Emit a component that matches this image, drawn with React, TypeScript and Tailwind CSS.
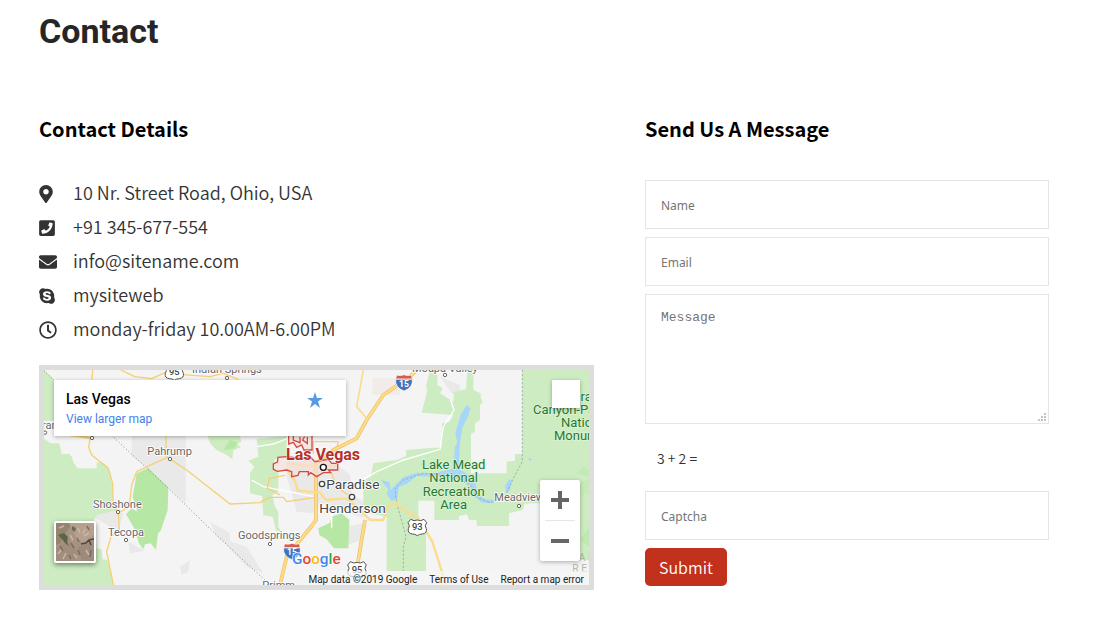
import React from "react";
import { FaEnvelope, FaMapMarkerAlt, FaPhoneSquare, FaRegClock, FaSkype } from "react-icons/fa";

const details = [
  { icon: FaMapMarkerAlt, size: "w-[14px]", text: "10 Nr. Street Road, Ohio, USA" },
  { icon: FaPhoneSquare, size: "w-4", text: "+91 345-677-554" },
  { icon: FaEnvelope, size: "w-[18px]", text: "info@sitename.com" },
  { icon: FaSkype, size: "w-4", text: "mysiteweb" },
  { icon: FaRegClock, size: "w-[18px]", text: "monday-friday 10.00AM-6.00PM" },
];

const town = { fontFamily: "Roboto, sans-serif", fill: "#666", stroke: "#fff", strokeWidth: 5, paintOrder: "stroke" } as const;

function Interstate({ x, y }: { x: number; y: number }) {
  return (
    <g transform={`translate(${x} ${y})`}>
      <path d="M-22-22Q-11-18 0-23Q11-18 22-22L25-10H-25Z" fill="#d75a4a" stroke="#fff" strokeWidth="2" />
      <path d="M-25-9H25Q28 15 0 26Q-28 15-25-9Z" fill="#3f73bd" stroke="#fff" strokeWidth="2" />
      <text y="13" textAnchor="middle" fontSize="26" fontWeight="700" fontFamily="Roboto, sans-serif" fill="#fff">15</text>
    </g>
  );
}

function Highway({ x, y, label }: { x: number; y: number; label: string }) {
  return (
    <g transform={`translate(${x} ${y})`}>
      <path
        d="M-20-24Q-10-17 0-22Q10-17 20-24L28-14Q20-4 27 4Q30 18 15 20Q6 20 0 25Q-6 20-15 20Q-30 18-27 4Q-20-4-28-14Z"
        fill="#fff"
        stroke="#555"
        strokeWidth="3"
      />
      <text y="9" textAnchor="middle" fontSize="28" fontWeight="500" fontFamily="Roboto, sans-serif" fill="#444">{label}</text>
    </g>
  );
}

function MapDrawing() {
  return (
    <svg viewBox="42 30 1635 645" preserveAspectRatio="xMidYMid slice" className="block h-full w-full" aria-hidden="true">
      <rect x="-400" y="-400" width="2600" height="1500" fill="#f4f4f4" />
      <g fill="#e9e9e9">
        <path d="M305 220H467V430L410 378L350 322L305 288Z" />
        <path d="M190 470L262 440L280 462L266 510L240 500Z" />
        <path d="M295 545L345 572L300 580Z" />
        <path d="M540 485L600 520V560L560 530Z" />
        <path d="M570 535L650 560L700 640L650 620Z" />
        <path d="M450 620L480 600L475 635L455 645Z" />
        <path d="M770 300H905L960 345L965 405L1010 430L1000 475L960 460L930 440L870 430L850 460L800 455L785 400L770 350Z" />
        <path d="M950 500L1000 490V540L950 555Z" />
        <path d="M1230 50L1290 75L1290 118L1265 100Z" />
      </g>
      <path d="M1028 55H1110V105H1028Z" fill="#f2ebe8" />
      <g fill="#cdecc2">
        <path d="M42 30L72 58V182H42Z" />
        <path d="M42 236L62 250H88L95 282H118L125 290L130 306L142 325H200V307H215L232 318L242 345L248 385V440L262 450L200 465L190 485L200 565L215 567L218 598L232 600L250 675H42Z" />
        <path d="M530 220H628L634 245L622 252L632 262L610 270L607 298L590 285L560 270L540 250Z" />
        <path d="M680 236L770 228V290L735 298L730 320L745 335V395L727 405L735 440L745 455V500L755 515L738 512L728 470L700 466L696 408L660 400V338L673 320L655 302L685 290Z" />
        <path d="M1000 400L1003 360L1022 350L1030 310L1100 300L1170 270L1128 295V270L1235 262L1236 190L1258 186L1270 165L1175 158L1192 92L1188 78L1200 30L1222 45V75L1238 85L1230 100L1270 125L1272 95L1308 88L1312 30H1330V90L1352 100V112L1358 125L1350 135V180L1335 190V215L1323 222V340H1430V305L1455 302V282H1477V30H1677V675H1560L1530 560L1530 440L1485 430L1478 450L1437 460V498H1340V480H1318L1310 463L1287 468V480H1213V422H1165V480L1188 490V633H1070V470L1000 455Z" />
      </g>
      <path d="M1495 430H1530V600H1677V675H1437V500L1478 450Z" fill="#f4f4f4" />
      <path d="M1640 580L1650 540L1677 520V600Z" fill="#cdecc2" />
      <g fill="#b7e7a5">
        <path d="M320 340L355 324L415 382L413 450L393 510L384 520L378 570L362 550L345 553L340 568L326 548L316 510L288 463L305 445L322 455L308 410Z" />
        <path d="M865 505L900 488L905 470L935 460L958 480L955 565H912L890 538L868 525Z" />
        <path d="M600 240L622 248L614 265L580 270Z" />
        <path d="M1640 340L1660 320L1677 330V350Z" opacity=".5" />
        <path d="M1560 380L1620 375L1677 360V400L1600 420Z" opacity=".3" />
        <path d="M1650 540L1677 500V560Z" opacity=".6" />
      </g>
      <g fill="none" stroke="#fff" strokeWidth="4">
        <path d="M995 360L1040 335L1120 300L1230 268L1240 200L1272 150L1262 120" />
        <path d="M680 260L730 252L780 232M850 410L700 380L665 360M905 460V505" />
      </g>
      <g fill="#a8d6fb">
        <path d="M1052 360L1078 366L1082 390L1120 352L1160 338L1210 340L1270 326L1275 260L1282 245L1276 220L1292 165L1310 135L1321 145L1314 170L1298 200L1290 245L1286 325L1320 348L1335 365L1342 398L1365 418L1395 420L1390 430L1358 428L1333 410L1320 375L1280 352L1230 352L1160 348L1130 372L1107 380L1101 418L1083 422L1070 400L1075 388Z" />
        <path d="M1428 400L1426 375L1438 358L1446 360L1440 390Z" />
        <circle cx="1500" cy="298" r="4" />
      </g>
      <g fill="none" stroke="#93a99b" strokeWidth="2.5" strokeDasharray="7 5">
        <path d="M1477 30V305L1450 355L1425 410L1380 428L1348 415L1325 380L1270 345L1180 340L1120 360L1095 385L1100 430L1120 500L1128 530L1120 560V633" />
      </g>
      <path d="M42 32L240 222L410 380L570 535L650 610L720 675" fill="none" stroke="#888" strokeWidth="3" strokeDasharray="3 7" />

      <g fill="none" stroke="#f6cf73" strokeWidth="4" strokeLinejoin="round">
        <path d="M188 30L186 58M272 30L315 50L365 56L405 38M460 44L540 50L580 40L625 58" />
        <path d="M408 228V275L412 292L390 302L320 335L305 375L300 420L282 450L265 458L250 440L248 370L235 325L185 285L176 262L180 235" />
        <path d="M412 292L470 330L600 432L690 428L718 412L760 412L770 425L855 412" />
        <path d="M265 458L268 510L243 530L230 575L250 675" />
        <path d="M120 225L185 234" strokeWidth="7" />
        <path d="M765 346L718 355L712 385L750 405M850 282V245H925L915 290M905 340L918 380L955 405" />
      </g>
      <g fill="none" strokeLinejoin="round">
        <g stroke="#efbf58" strokeWidth="11">
          <path d="M750 675L770 590L845 498L858 480V310L910 270L980 235L1010 180L1060 105L1140 50L1160 30" />
          <path d="M1005 480L984 605" />
        </g>
        <g stroke="#fbdc8c" strokeWidth="7">
          <path d="M750 675L770 590L845 498L858 480V310L910 270L980 235L1010 180L1060 105L1140 50L1160 30" />
          <path d="M1005 480L984 605M770 310L840 318H925M770 325L795 365L803 392L870 398L888 420L950 415L1000 460L1020 480H1060L1072 440L1100 430L1130 455L1165 475L1207 545L1248 675" />
          <path d="M1000 30L980 140L1010 175" strokeWidth="5" />
        </g>
      </g>
      <g fill="#f6ded9" fillOpacity=".65" stroke="#d64a40" strokeWidth="4">
        <path d="M776 225V252L790 247L800 262L815 255L822 270H846V225M790 228V240L810 248V230M832 230V250L818 240L824 230" />
        <path d="M770 290L744 292L742 306L730 312V328L742 334L770 330L785 335V350L804 346L808 335H835V345L842 338L860 350L880 338H902L895 330H923V310H905L895 298L855 305L840 290L820 296Z" />
      </g>

      <g fill="#fff" stroke="#666" strokeWidth="3">
        <circle cx="45" cy="218" r="5" />
        <circle cx="186" cy="234" r="5" />
        <circle cx="420" cy="297" r="5" />
        <circle cx="264" cy="456" r="5" />
        <circle cx="288" cy="540" r="5" />
        <circle cx="720" cy="552" r="5" />
        <circle cx="591" cy="54" r="5" />
        <circle cx="1245" cy="45" r="5" />
        <circle cx="1467" cy="438" r="5" />
      </g>
      <g fill="#fff" stroke="#444" strokeWidth="4">
        <circle cx="876" cy="372" r="8" />
        <circle cx="966" cy="411" r="8" />
      </g>

      <g {...town} fontSize="33">
        <text x="36" y="207">ran</text>
        <text x="352" y="285">Pahrump</text>
        <text x="189" y="444">Shoshone</text>
        <text x="234" y="528">Tecopa</text>
        <text x="624" y="537">Goodsprings</text>
        <text x="697" y="686">Primm</text>
        <text x="486" y="39">Indian Springs</text>
        <text x="1146" y="36">Moapa Valley</text>
        <text x="1393" y="423">Meadview</text>
      </g>
      <g fontFamily="Roboto, sans-serif" fontSize="41" fill="#444" stroke="#fff" strokeWidth="5" paintOrder="stroke">
        <text x="889" y="387">Paradise</text>
        <text x="868" y="458">Henderson</text>
      </g>
      <g fontFamily="Roboto, sans-serif" fontSize="39" fill="#227a2c" stroke="#e2f4dc" strokeWidth="4" paintOrder="stroke">
        <text x="1271" y="328" textAnchor="middle">Lake Mead</text>
        <text x="1271" y="367" textAnchor="middle">National</text>
        <text x="1271" y="407" textAnchor="middle">Recreation</text>
        <text x="1271" y="446" textAnchor="middle">Area</text>
        <text x="1625" y="122">Grand</text>
        <text x="1509" y="161">Canyon-Parashant</text>
        <text x="1593" y="200">National</text>
        <text x="1572" y="239">Monument</text>
      </g>
      <g fontFamily="Roboto, sans-serif" fontSize="31" fill="#b5b7a8">
        <text x="1646" y="602">A R</text>
        <text x="1627" y="635">R E</text>
      </g>
      <text x="768" y="301" fontFamily="Roboto, sans-serif" fontSize="48" fontWeight="700" fill="#b5302b" stroke="#fff" strokeWidth="4" strokeOpacity=".7" paintOrder="stroke">Las Vegas</text>
      <circle cx="880" cy="322" r="9" fill="#fff" stroke="#111" strokeWidth="4" />
      <Interstate x={1122} y={67} />
      <Interstate x={786} y={573} />
      <Highway x={433} y={36} label="95" />
      <Highway x={1162} y={502} label="93" />
      <Highway x={981} y={629} label="95" />
      <text x="786" y="613" fontFamily="Roboto, sans-serif" fontSize="46" fontWeight="500" stroke="#fff" strokeWidth="4" paintOrder="stroke">
        <tspan fill="#4285f4">G</tspan>
        <tspan fill="#ea4335">o</tspan>
        <tspan fill="#fbbc05">o</tspan>
        <tspan fill="#4285f4">g</tspan>
        <tspan fill="#34a853">l</tspan>
        <tspan fill="#ea4335">e</tspan>
      </text>
    </svg>
  );
}

function SatelliteThumb() {
  return (
    <svg viewBox="0 0 38 38" className="block h-full w-full" aria-hidden="true">
      <rect width="38" height="38" fill="#a69382" />
      <path d="M0 0H17L10 9L5 20L0 22Z" fill="#94856f" />
      <path d="M13 0H38V12L27 20L20 14Z" fill="#b5a08d" />
      <path d="M0 26L12 16L23 30L18 38H0Z" fill="#a08d7c" />
      <path d="M22 24L38 18V38H26Z" fill="#9c8b7b" />
      <path d="M2 12L8 10L12 14L11 19L13 23L9 20L6 16Z" fill="#5e624c" />
      <path d="M16 3L20 5L19 9L16 7Z" fill="#6b6a55" />
      <path d="M25 21L30 20L33 17L38 16M33 17L35 22" fill="none" stroke="#50483f" strokeWidth="1.500" />
      <path d="M2 31L6 26M10 30L7 36M22 5L24 10M29 6L27 11M3 5L8 3M18 31L21 35M28 13L33 10M14 12L17 17M30 27L33 32" fill="none" stroke="#c9b7a5" strokeWidth="1.500" />
      <path d="M15 20L18 25M4 23L7 28M22 27L24 32M31 3L33 7M21 15L23 19M13 32L15 36M35 27L34 34" fill="none" stroke="#7d6d5e" strokeWidth="1.500" />
    </svg>
  );
}

function LocationMap() {
  return (
    <div className="relative h-[225px] overflow-hidden border-5 border-[#dddddd] font-[Roboto,sans-serif]">
      <MapDrawing />
      <div className="absolute top-[10px] left-[10px] flex h-14 w-[292px] justify-between bg-white pt-[10px] pr-[19px] pl-3 shadow-[0_1px_4px_rgba(0,0,0,0.3)]">
        <div>
          <div className="text-[14px] leading-[18px] font-medium text-black">Las Vegas</div>
          <a href="#map" className="block text-[12px] leading-[22px] text-[#427fed]">View larger map</a>
        </div>
        <button type="button" aria-label="Save" className="mt-[2px] h-4 w-6">
          <svg viewBox="0 0 16 16" className="mx-auto h-4 w-4" aria-hidden="true">
            <path d="M8 0L10 6H16L11 9.500L13 16L8 12L3 16L5 9.500L0 6H6Z" fill="#5a9ae5" />
          </svg>
        </button>
      </div>
      <button type="button" aria-label="Toggle fullscreen view" className="absolute top-[10px] right-[9px] h-7 w-7 bg-white shadow-[0_1px_4px_rgba(0,0,0,0.3)]" />
      <button type="button" aria-label="Satellite view" className="absolute bottom-[22px] left-[10px] h-[42px] w-[42px] rounded-xs border-2 border-white shadow-[0_2px_5px_rgba(0,0,0,0.45)]">
        <SatelliteThumb />
      </button>
      <div className="absolute right-[9px] bottom-6 flex w-10 flex-col items-center rounded-xs bg-white shadow-[0_1px_4px_rgba(0,0,0,0.3)]">
        <button type="button" aria-label="Zoom in" className="flex h-10 w-10 items-center justify-center">
          <svg viewBox="0 0 18 18" className="h-[18px] w-[18px]" aria-hidden="true"><path d="M7 0h4v7h7v4h-7v7H7v-7H0V7h7z" fill="#666" /></svg>
        </button>
        <span className="h-px w-[30px] bg-[#e6e6e6]" />
        <button type="button" aria-label="Zoom out" className="flex h-10 w-10 items-center justify-center">
          <svg viewBox="0 0 18 18" className="h-[18px] w-[18px]" aria-hidden="true"><path d="M0 7h18v4H0z" fill="#666" /></svg>
        </button>
      </div>
      <div className="absolute right-0 bottom-0 flex items-center gap-3 bg-[#f5f5f5]/70 pr-[5px] pl-[6px] pt-1 text-[10px] leading-[10px] text-[#222]">
        <span>Map data ©2019 Google</span>
        <a href="#terms">Terms of Use</a>
        <a href="#report">Report a map error</a>
      </div>
    </div>
  );
}

const field = "block w-full border border-[#e5e5e5] bg-white px-[15px] placeholder-[#757575] outline-none";
const line = `${field} h-[49px] pt-[2px] font-['Noto_Sans',sans-serif] text-[12px] font-normal`;

export default function App() {
  return (
    <main className="pr-[58px] pb-8 pl-[39px] font-['Noto_Sans_CJK_SC',sans-serif] font-[350] text-[#333]">
      <h1 className="pt-[11px] font-[Roboto,sans-serif] text-[34px] leading-10 font-bold text-[#262626]">Contact</h1>
      <div className="mt-16 grid grid-cols-[3fr_2fr]">
        <section className="min-w-0 pr-[51px]">
          <h2 className="text-[20px] leading-7 font-bold text-black">Contact Details</h2>
          <ul className="mt-8">
            {details.map(({ icon: Icon, size, text }) => (
              <li key={text} className="flex h-[34px] items-center text-[18px] leading-[34px]">
                <span className="w-[34px] shrink-0 pt-[3px]">
                  <Icon className={`h-[18px] ${size}`} aria-hidden="true" />
                </span>
                {text}
              </li>
            ))}
          </ul>
          <div className="mt-5 font-normal">
            <LocationMap />
          </div>
        </section>
        <section className="min-w-0">
          <h2 className="text-[20px] leading-7 font-bold text-black">Send Us A Message</h2>
          <form className="mt-[37px]" onSubmit={(e) => e.preventDefault()}>
            <div className="flex flex-col gap-2">
              <input type="text" aria-label="Name" placeholder="Name" className={line} />
              <input type="email" aria-label="Email" placeholder="Email" className={line} />
              <div className="relative">
                <textarea aria-label="Message" placeholder="Message" className={`${field} h-[130px] resize-none py-[15px] font-['Liberation_Mono',monospace] text-[13px] leading-4 font-normal`} />
                <svg viewBox="0 0 9 9" className="pointer-events-none absolute right-[3px] bottom-[3px] h-[9px] w-[9px]" aria-hidden="true">
                  <path d="M7 1h2v2H7zM4 4h2v2H4zM7 4h2v2H7zM1 7h2v2H1zM4 7h2v2H4zM7 7h2v2H7z" fill="#c4c4c4" />
                </svg>
              </div>
            </div>
            <label htmlFor="captcha" className="block pt-[22px] pb-[21px] pl-3 text-[14px] leading-6">3 + 2 =</label>
            <input id="captcha" type="text" placeholder="Captcha" className={line} />
            <button type="submit" className="mt-2 h-[38px] rounded-[5px] bg-[#c2311b] px-[14px] text-[16px] leading-6 text-white">Submit</button>
          </form>
        </section>
      </div>
    </main>
  );
}
